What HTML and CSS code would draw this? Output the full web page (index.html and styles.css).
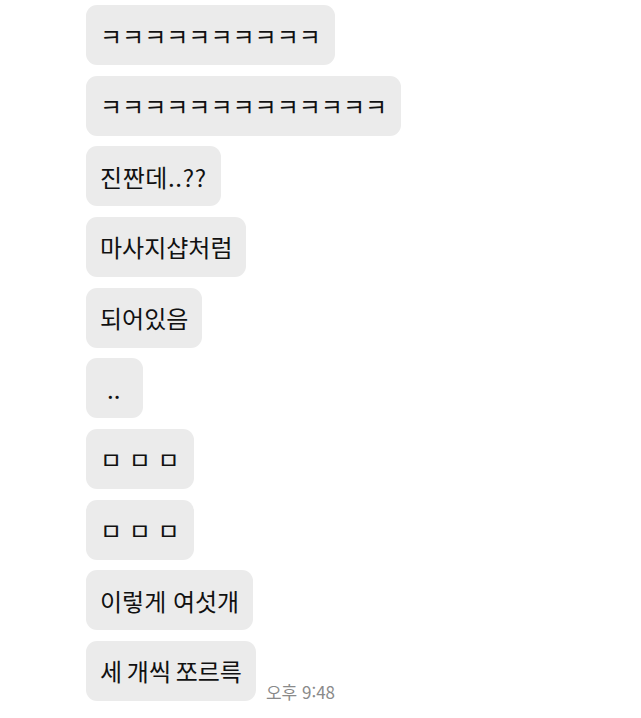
FILE: index.html
```html
<!DOCTYPE html>
<html lang="ko">
<head>
  <meta charset="UTF-8">
  <title>채팅</title>
  <link rel="stylesheet" href="styles.css">
</head>
<body>
  <div class="chat">
    <div class="row"><div class="bubble">ㅋㅋㅋㅋㅋㅋㅋㅋㅋㅋ</div></div>
    <div class="row"><div class="bubble">ㅋㅋㅋㅋㅋㅋㅋㅋㅋㅋㅋㅋㅋ</div></div>
    <div class="row"><div class="bubble punct">진짠데..??</div></div>
    <div class="row"><div class="bubble">마사지샵처럼</div></div>
    <div class="row"><div class="bubble">되어있음</div></div>
    <div class="row"><div class="bubble dots">..</div></div>
    <div class="row"><div class="bubble">ㅁ ㅁ ㅁ</div></div>
    <div class="row"><div class="bubble">ㅁ ㅁ ㅁ</div></div>
    <div class="row"><div class="bubble">이렇게 여섯개</div></div>
    <div class="row">
      <div class="bubble tight">세 개씩 쪼르륵</div>
      <span class="time">오후 9:48</span>
    </div>
  </div>
</body>
</html>
```

FILE: styles.css
```css
body {
  margin: 0;
  background-color: white;
  font-family: "Noto Sans CJK KR", "Noto Sans", sans-serif;
  color: #111;
}

.chat {
  display: flex;
  flex-direction: column;
  gap: 10.67px;
  padding: 5px 0 0 86px;
}

.row {
  display: flex;
  align-items: flex-end;
}

.bubble {
  display: flex;
  align-items: center;
  height: 60px;
  padding: 0 14px;
  background-color: #ebebeb;
  border-radius: 11px;
  font-size: 24px;
  white-space: pre;
}

.bubble.punct {
  letter-spacing: 0.6px;
}

.bubble.dots {
  padding: 0 23px 0 21px;
}

.bubble.tight {
  word-spacing: -2px;
}

.time {
  margin: 0 0 -3px 10px;
  font-size: 17px;
  color: #8a8a8a;
}
```
